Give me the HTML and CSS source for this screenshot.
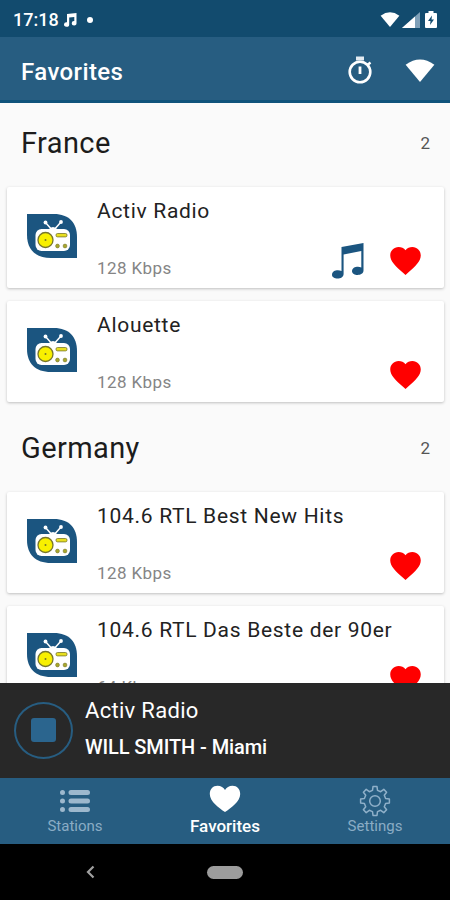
FILE: index.html
```
<!DOCTYPE html>
<html lang="en">
<head>
  <meta charset="UTF-8" />
  <meta name="viewport" content="width=device-width, initial-scale=1.0"/>
  <title>Favorites</title>
  <link rel="stylesheet" href="styles.css">
</head>
<body>

  <!-- Shared icons -->
  <svg class="icon-defs" width="0" height="0">
    <symbol id="logo" viewBox="0 0 50 44">
      <path fill="#1b5580" d="M0 0H27C42 0 50 9 50 23V44H24C8 44 0 35 0 21Z"/>
      <path d="M26 17 18.500 8.500M26 17 34 8" stroke="#fff" stroke-width="1.500"/>
      <circle cx="18.500" cy="8.500" r="1.900" fill="#fff"/>
      <circle cx="34" cy="8" r="1.900" fill="#fff"/>
      <path d="M21 16Q26 10 31 16Z" fill="#fff"/>
      <rect x="8.500" y="15" width="34.500" height="22" rx="6" fill="#fff"/>
      <circle cx="18.500" cy="26" r="7.500" fill="#f8f000" stroke="#77762c" stroke-width="1.300"/>
      <circle cx="18.500" cy="26" r="1" fill="#77762c"/>
      <rect x="29" y="19.500" width="11" height="3.400" rx="1.500" fill="#e8df20" stroke="#77762c" stroke-width=".8"/>
      <circle cx="30.500" cy="32" r="1.900" fill="#a9a82b" stroke="#77762c" stroke-width=".6"/>
      <circle cx="38" cy="32" r="1.900" fill="#a9a82b" stroke="#77762c" stroke-width=".6"/>
    </symbol>
    <symbol id="heart" viewBox="2 3 20 18.350">
      <path d="M12 21.350l-1.450-1.320C5.400 15.360 2 12.280 2 8.500 2 5.420 4.420 3 7.500 3c1.740 0 3.410.81 4.500 2.090C13.090 3.810 14.760 3 16.500 3 19.580 3 22 5.420 22 8.500c0 3.780-3.400 6.860-8.550 11.540z"/>
    </symbol>
    <symbol id="wifi" viewBox="0 0 30 24">
      <path d="M0 6Q15-5 30 6L15 24Z"/>
    </symbol>
  </svg>

  <div class="screen">

    <!-- Status bar -->
    <div class="status-bar">
      <span class="clock">17:18</span>
      <svg class="status-note" width="14" height="14" viewBox="0 0 14 14">
        <path fill="#fff" d="M4 1 13.500 0V10A2.400 2.200 0 1 1 11.300 8V4L6.200 4.500V11.500A2.600 2.300 0 1 1 4 9.300Z"/>
      </svg>
      <span class="status-dot"></span>
      <div class="status-right">
        <svg width="20" height="15" fill="#fff"><use href="#wifi"/></svg>
        <svg width="18" height="16" viewBox="0 0 18 16">
          <path d="M18 0V16H0Z" fill="#7fa0b8"/>
          <path d="M13 4.400V16H0Z" fill="#fff"/>
        </svg>
        <svg class="battery" width="12" height="17" viewBox="0 0 12 17">
          <path fill="#fff" d="M3.500 0h5v2H11q1 0 1 1V16q0 1-1 1H1q-1 0-1-1V3q0-1 1-1h2.500z"/>
          <path fill="#124b6e" d="M7 4.500 3 10H5.500L5 14 9 8.500H6.500Z"/>
        </svg>
      </div>
    </div>

    <!-- App bar -->
    <header class="app-bar">
      <h1>Favorites</h1>
      <svg class="timer" width="26" height="28" viewBox="0 0 26 28">
        <path d="M9 2.500H17" stroke="#e3ebf1" stroke-width="4"/>
        <circle cx="13" cy="16" r="10.300" fill="none" stroke="#fff" stroke-width="2.600"/>
        <path d="M13 10.500V18" stroke="#fff" stroke-width="2.800"/>
        <path d="M20.500 9 23.500 6.500" stroke="#fff" stroke-width="2.400"/>
      </svg>
      <svg width="30" height="23" fill="#fff"><use href="#wifi"/></svg>
    </header>

    <!-- Favorites by country -->
    <main class="list">
      <section class="group">
        <div class="group-header"><h2>France</h2><span class="count">2</span></div>
        <div class="card">
          <svg class="logo"><use href="#logo"/></svg>
          <div class="info"><h3>Activ Radio</h3><p>128 Kbps</p></div>
          <svg class="playing" width="32" height="36" viewBox="0 0 32 36">
            <path fill="#1b5580" d="M9.500 4 31.500 0V27.500C31.500 33.500 20 33 20 28.200 20 24 26 22.800 29.300 24.500V8L11.600 11.500V31C11.600 37 0 37 0 31.800 0 27.300 6 26.500 9.500 28Z"/>
          </svg>
          <svg class="heart"><use href="#heart"/></svg>
        </div>
        <div class="card">
          <svg class="logo"><use href="#logo"/></svg>
          <div class="info"><h3>Alouette</h3><p>128 Kbps</p></div>
          <svg class="heart"><use href="#heart"/></svg>
        </div>
      </section>

      <section class="group">
        <div class="group-header"><h2>Germany</h2><span class="count">2</span></div>
        <div class="card">
          <svg class="logo"><use href="#logo"/></svg>
          <div class="info"><h3>104.6 RTL Best New Hits</h3><p>128 Kbps</p></div>
          <svg class="heart"><use href="#heart"/></svg>
        </div>
        <div class="card">
          <svg class="logo"><use href="#logo"/></svg>
          <div class="info"><h3>104.6 RTL Das Beste der 90er</h3><p>64 Kbps</p></div>
          <svg class="heart"><use href="#heart"/></svg>
        </div>
      </section>
    </main>

    <!-- Player -->
    <div class="player">
      <button class="stop-btn" aria-label="Stop"><span class="stop-icon"></span></button>
      <div class="now-playing">
        <p class="station">Activ Radio</p>
        <p class="track">WILL SMITH - Miami</p>
      </div>
    </div>

    <!-- Bottom tabs -->
    <nav class="tabs">
      <a class="tab">
        <svg width="30" height="32" viewBox="0 0 30 32" stroke="#9db8cd" stroke-width="5" stroke-linecap="round">
          <path d="M2.500 7.500h0M2.500 16h0M2.500 24.500h0M11 7.500H27.500M11 16H27.500M11 24.500H27.500"/>
        </svg>
        <span>Stations</span>
      </a>
      <a class="tab active">
        <svg width="32" height="32" viewBox="0 0 32 32">
          <path fill="#fff" d="M16 27C10 23 .8 16.500 .8 9 .8 4 4 .8 8.500 .8 12 .8 14.500 2.600 16 5 17.500 2.600 20 .8 23.500 .8 28 .8 31.200 4 31.200 9 31.200 16.500 22 23 16 27Z"/>
        </svg>
        <span>Favorites</span>
      </a>
      <a class="tab">
        <svg width="32" height="32" viewBox="-16 -16 32 32" fill="none" stroke="#8fb0c9" stroke-width="1.500" stroke-linejoin="round">
          <path d="M-2.500-10.600-2-14.400H2L2.500-10.600 5.700-9.300 8.800-11.600 11.600-8.800 9.300-5.700 10.600-2.500 14.400-2V2L10.600 2.500 9.300 5.700 11.600 8.800 8.800 11.600 5.700 9.300 2.500 10.600 2 14.400H-2L-2.500 10.600-5.700 9.300-8.800 11.600-11.600 8.800-9.300 5.700-10.600 2.500-14.400 2V-2L-10.600-2.500-9.300-5.700-11.600-8.800-8.800-11.600-5.700-9.300Z"/>
          <circle r="5.300"/>
        </svg>
        <span>Settings</span>
      </a>
    </nav>

    <!-- System navigation -->
    <div class="system-nav">
      <svg width="9" height="14" viewBox="0 0 9 14">
        <path d="M7.500 1.500 2 7 7.500 12.500" fill="none" stroke="#a0a0a0" stroke-width="2.200"/>
      </svg>
      <span class="home-pill"></span>
    </div>
  </div>

</body>
</html>
```
FILE: styles.css
```
* { margin: 0; padding: 0; box-sizing: border-box; }

html, body {
  height: 100%;
  overflow: hidden;
  font-family: Roboto, sans-serif;
}

.icon-defs { display: block; }

.screen {
  display: flex;
  flex-direction: column;
  width: 450px;
  height: 900px;
  background: #fafafa;
}

/* Status bar */
.status-bar {
  flex: 0 0 37px;
  display: flex;
  align-items: center;
  padding: 2px 13px 0;
  background: #124b6e;
  color: #fff;
}

.clock {
  width: 50px;
  font-size: 18px;
  font-weight: 500;
  white-space: nowrap;
}

.status-dot {
  width: 6px;
  height: 6px;
  margin-left: 10px;
  border-radius: 50%;
  background: #fff;
}

.status-right {
  display: flex;
  align-items: center;
  gap: 2px;
  margin-left: auto;
}

.battery { margin-left: 3px; }

/* App bar */
.app-bar {
  flex: 0 0 66px;
  display: flex;
  align-items: center;
  padding: 4px 15px 0 21px;
  background: #275d81;
  border-bottom: 3px solid #0f537b;
  color: #fff;
}

.app-bar h1 {
  flex: 1;
  padding-top: 2px;
  font-size: 24px;
  font-weight: 500;
  letter-spacing: 0.4px;
}

.timer { margin: 0 32px 2px 0; }

/* Station list */
.list {
  flex: 1;
  min-height: 0;
  overflow: hidden;
}

.group { height: 305px; }

.group-header {
  display: flex;
  align-items: center;
  justify-content: space-between;
  height: 83.5px;
  padding: 0 20px 4px 21px;
}

.group-header h2 {
  font-size: 29px;
  font-weight: 400;
  letter-spacing: 0.4px;
  color: #1c1c1c;
}

.count {
  font-size: 17px;
  color: #555;
}

.card {
  display: flex;
  height: 101px;
  margin: 0 6px 13.5px 7px;
  padding-right: 23px;
  background: #fff;
  border-radius: 2px;
  box-shadow: 0 1px 3px rgba(0, 0, 0, 0.24);
}

.card svg { flex-shrink: 0; }

.logo {
  width: 50px;
  height: 44px;
  margin: 27px 20px 0;
}

.info {
  flex: 1;
  min-width: 0;
  white-space: nowrap;
}

.info h3 {
  margin-top: 11px;
  font-size: 21px;
  line-height: 26px;
  font-weight: 400;
  letter-spacing: 0.7px;
  color: #222;
}

.info p {
  margin-top: 34px;
  font-size: 17px;
  line-height: 20px;
  letter-spacing: 0.4px;
  color: #858585;
}

.playing { margin: 56px 26px 0 0; }

.heart {
  width: 31px;
  height: 28px;
  margin-top: 60px;
  fill: #f00;
}

/* Player */
.player {
  flex: 0 0 95px;
  display: flex;
  align-items: center;
  padding: 0 0 1px 14px;
  background: #282828;
  color: #fff;
}

.stop-btn {
  display: flex;
  align-items: center;
  justify-content: center;
  width: 59px;
  height: 57px;
  background: none;
  border: 2px solid #275d81;
  border-radius: 50%;
}

.stop-icon {
  width: 25px;
  height: 24px;
  border-radius: 3px;
  background: #2b658e;
}

.now-playing {
  margin-left: 12px;
  padding-bottom: 3px;
}

.station {
  font-size: 22px;
  line-height: 26px;
  letter-spacing: 0.3px;
}

.track {
  margin-top: 11px;
  font-size: 20px;
  line-height: 24px;
  font-weight: 500;
  letter-spacing: -0.1px;
}

/* Bottom tabs */
.tabs {
  flex: 0 0 66px;
  display: flex;
  background: #275d81;
}

.tab {
  flex: 1;
  display: flex;
  flex-direction: column;
  align-items: center;
  padding-top: 7px;
  font-size: 15px;
  line-height: 19px;
  color: #8aacc5;
}

.tab.active {
  font-size: 17px;
  font-weight: 500;
  color: #fff;
}

/* System navigation */
.system-nav {
  flex: 0 0 56px;
  display: flex;
  align-items: center;
  padding-left: 86px;
  background: #000;
}

.home-pill {
  width: 36px;
  height: 13px;
  margin-left: 112px;
  border-radius: 7px;
  background: #9c9c9c;
}
```
